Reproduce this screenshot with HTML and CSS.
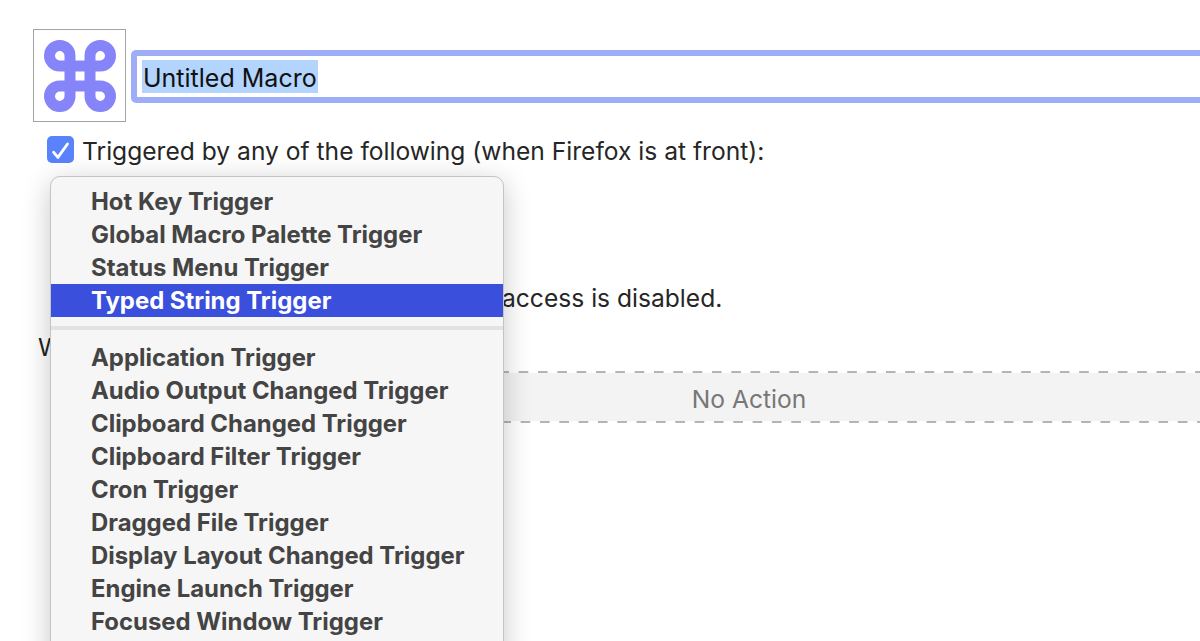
FILE: index.html
```html
<!DOCTYPE html>
<html lang="en">
<head>
<meta charset="utf-8">
<title>Untitled Macro</title>
<link rel="stylesheet" href="styles.css">
</head>
<body>
<main class="page">
  <header class="title-row">
    <div class="icon-well">
      <svg class="cmd-icon" viewBox="0 0 72 72" width="72" height="72" aria-hidden="true">
        <path d="M46 15.75V56.25A10.25 10.25 0 1 0 56.25 46H15.75A10.25 10.25 0 1 0 26 56.25V15.75A10.25 10.25 0 1 0 15.75 26H56.25A10.25 10.25 0 1 0 46 15.75"/>
      </svg>
    </div>
    <div class="title-field"><span class="selection">Untitled Macro</span></div>
  </header>
  <div class="trigger-row">
    <span class="checkbox">
      <svg viewBox="0 0 27 27" width="27" height="27" aria-hidden="true"><path d="M6.5 16.2l4.4 5.2 9.6-13.4"/></svg>
    </span>
    <span class="trigger-text">Triggered by any of the following (when Firefox is at front):</span>
  </div>
  <p class="disabled-note">access is disabled.</p>
  <p class="actions-label">Will execute the following actions:</p>
  <div class="action-drop">No Action</div>

  <nav class="menu">
    <div class="menu-item">Hot Key Trigger</div>
    <div class="menu-item">Global Macro Palette Trigger</div>
    <div class="menu-item">Status Menu Trigger</div>
    <div class="menu-item active">Typed String Trigger</div>
    <div class="menu-sep"></div>
    <div class="menu-item">Application Trigger</div>
    <div class="menu-item">Audio Output Changed Trigger</div>
    <div class="menu-item">Clipboard Changed Trigger</div>
    <div class="menu-item">Clipboard Filter Trigger</div>
    <div class="menu-item">Cron Trigger</div>
    <div class="menu-item">Dragged File Trigger</div>
    <div class="menu-item">Display Layout Changed Trigger</div>
    <div class="menu-item">Engine Launch Trigger</div>
    <div class="menu-item">Focused Window Trigger</div>
  </nav>
</main>
</body>
</html>
```
FILE: styles.css
```css
* { box-sizing: border-box; }
html, body { margin: 0; height: 100%; overflow: hidden; background: #fff; }
body { font-family: Inter, "Liberation Sans", sans-serif; color: #222; }
.page { position: relative; width: 1600px; height: 641px; overflow: hidden; padding: 29px 0 0 33px; font-size: 24.6px; }

.title-row { display: flex; align-items: center; gap: 5px; }
.icon-well { width: 93px; height: 93px; border: 1px solid #a3a3a3; display: flex; align-items: center; justify-content: center; flex: none; }
.cmd-icon { fill: none; stroke: #8585f9; stroke-width: 11; }
.title-field { flex: 1; height: 52.5px; margin-top: 2px; border: 6.5px solid #9fadf7; border-radius: 5px; background: #fff; padding: 4px 5px; display: flex; align-items: center; font-size: 25px; }
.selection { background: #b3d4fd; color: #111; line-height: 37px; height: 33px; padding: 0 1px; }

.trigger-row { display: flex; align-items: center; gap: 8px; margin: 14px 0 0 14px; height: 27px; color: #262626; }
.trigger-text { padding-top: 2px; }
.checkbox { width: 27px; height: 27px; background: #5a82fb; border-radius: 5px; display: block; }
.checkbox svg { display: block; fill: none; stroke: #fff; stroke-width: 2.8; stroke-linecap: round; stroke-linejoin: round; }

.disabled-note { margin: 120px 0 0 469px; line-height: 30px; color: #262626; }
.actions-label { margin: 19px 0 0 5px; line-height: 30px; color: #222; }

.action-drop {
  margin: 9px 0 0 27px; width: 1378px; height: 52px; padding-top: 3px;
  background:
    linear-gradient(90deg, #b4b4b4 10px, transparent 10px) 14.1px 0 / 19.33px 2px repeat-x,
    linear-gradient(90deg, #b4b4b4 10px, transparent 10px) 16.1px 100% / 19.33px 2px repeat-x,
    linear-gradient(#f3f3f3, #f3f3f3) 0 2px / 100% 48px no-repeat;
  color: #777; display: flex; align-items: center; justify-content: center;
}

.menu { position: absolute; left: 50px; top: 176px; width: 454px; padding: 8px 0 60px; background: #f6f6f6; border: 1px solid #c4c4c4; border-radius: 10px; box-shadow: 0 6px 28px rgba(0,0,0,.22); font-size: 23.9px; font-weight: 700; color: #444; }
.menu-item { height: 33px; line-height: 33px; padding-left: 40px; white-space: nowrap; }
.menu-item.active { background: #3a50dd; color: #fff; }
.menu-sep { height: 24px; padding-top: 9px; }
.menu-sep::before { content: ""; display: block; height: 4px; background: #e3e3e3; }
```
